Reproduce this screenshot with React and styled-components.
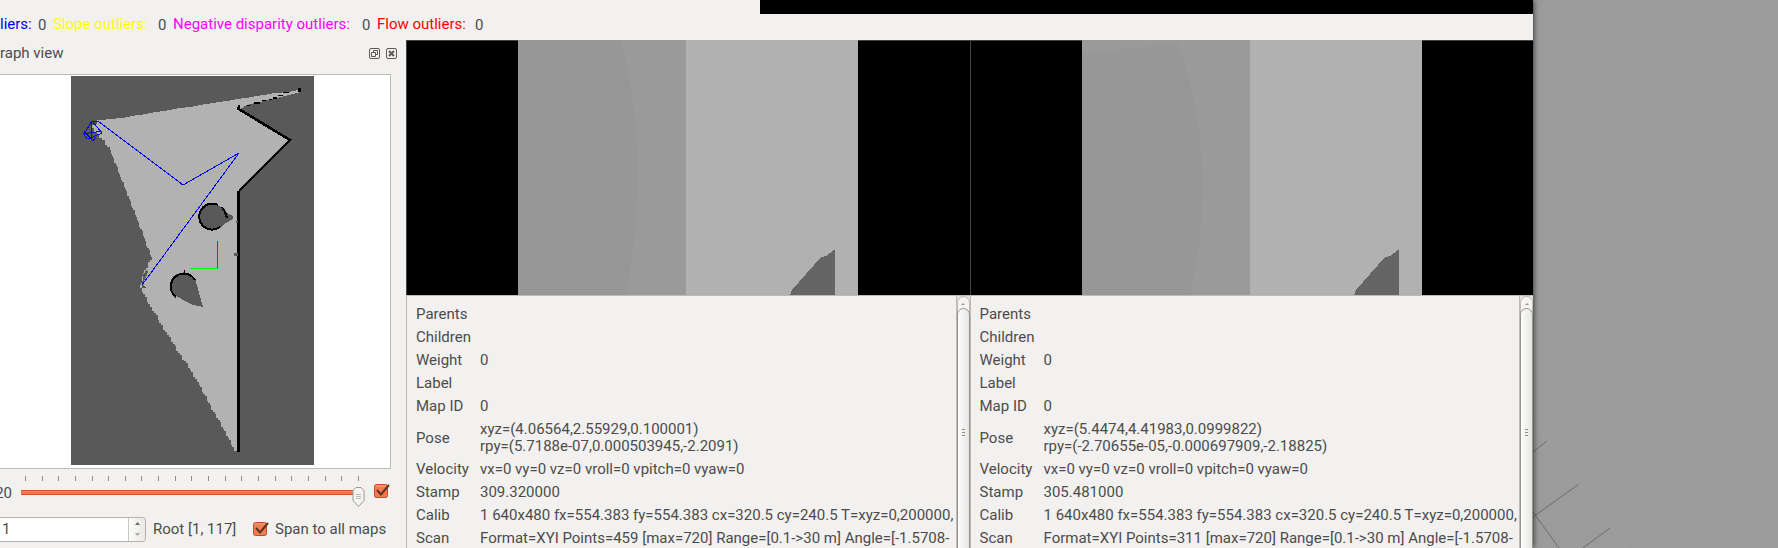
import React, { useState } from "react";
import styled, { createGlobalStyle } from "styled-components";

const GlobalStyle = createGlobalStyle`
  * { box-sizing: border-box; }
  body {
    margin: 0;
    background: #9b9b9b;
    color: #4c4c4c;
    font-family: Roboto, "Noto Sans", sans-serif;
    font-size: 15px;
    line-height: 17px;
  }
  button, input { font: inherit; color: inherit; margin: 0; padding: 0; }
`;

const Screen = styled.div`
  display: flex;
  height: 100vh;
  overflow: hidden;
`;

const Window = styled.main`
  flex: 1;
  min-width: 0;
  display: flex;
  flex-direction: column;
  background: #f2f1f0;
  box-shadow: 0 0 6px rgba(0, 0, 0, 0.8);
  z-index: 1;
`;

const TopStrip = styled.div`
  height: 14px;
  margin-left: 760px;
  background: #000;
`;

const StatusBar = styled.dl`
  display: flex;
  gap: 6px;
  height: 26px;
  margin: 0;
  padding-top: 2px;
  white-space: nowrap;
`;

const StatusName = styled.dt`
  width: ${(p) => p.$width}px;
  color: ${(p) => p.$color};
`;

const StatusValue = styled.dd`
  width: 9px;
  margin: 0;
  padding-top: 1px;
`;

const Workspace = styled.div`
  flex: 1;
  min-height: 0;
  display: flex;
`;

const Dock = styled.section`
  width: 406px;
  flex: none;
  display: flex;
  flex-direction: column;
`;

const DockHeader = styled.header`
  display: flex;
  align-items: center;
  gap: 6px;
  height: 26px;
  padding-right: 9px;
`;

const DockTitle = styled.h2`
  flex: 1;
  margin: 0;
  font-size: 15px;
  font-weight: 400;
`;

const DockButton = styled.button`
  width: 11px;
  height: 11px;
  border: 0;
  background: none;
  display: flex;
`;

const GraphFrame = styled.div`
  display: flex;
  justify-content: center;
  margin: 8px 15px 0 0;
  padding: 1px 5px 3px 0;
  border: solid #bebab5;
  border-width: 1px 1px 1px 0;
  background: #fff;

  svg { display: block; }
`;

const TimelineRow = styled.div`
  display: flex;
  align-items: flex-start;
  height: 47px;
  padding: 7px 16px 0 0;
`;

const TimelineValue = styled.output`
  width: 21px;
  flex: none;
  padding: 9px 9px 0 0;
  display: flex;
  justify-content: flex-end;
`;

const Timeline = styled.div`
  flex: 1;
  margin-right: 9px;
`;

const Ticks = styled.div`
  display: flex;
  justify-content: space-between;
  height: 5px;
  padding: 0 6px 0 4px;
`;

const Tick = styled.i`
  width: 1px;
  background: #8d8b88;
`;

const Slider = styled.input`
  appearance: none;
  display: block;
  width: 100%;
  height: 20px;
  margin-top: 6px;
  background: linear-gradient(#d2542b 0 1px, #f2824f 1px 2px, #f07746 2px 4px, #d2542b 4px 5px)
    0 3px / calc(100% - 8px) 5px no-repeat;
  border-radius: 3px;

  &::-webkit-slider-thumb {
    appearance: none;
    width: 13px;
    height: 20px;
    background: url("data:image/svg+xml,%3Csvg xmlns='http://www.w3.org/2000/svg' width='13' height='20'%3E%3Cpath d='M4 .5h5l3 3v10l-5.500 6-5.500-6v-10z' fill='%23f5f4f3' stroke='%239b9997'/%3E%3Cpath d='M4 7.500h5M4 9.500h5M4 11.500h5' stroke='%23bbb'/%3E%3C/svg%3E");
  }
`;

const Check = styled.input`
  appearance: none;
  flex: none;
  width: 16px;
  height: 16px;
  background: url("data:image/svg+xml,%3Csvg xmlns='http://www.w3.org/2000/svg' width='16' height='16'%3E%3Crect x='.5' y='1.500' width='13' height='13' rx='2' fill='%23f07c4e' stroke='%23bd4d2b'/%3E%3Cpath d='M1.500 3h11' stroke='%23f7a583'/%3E%3Cpath d='M3 7l4 4.500L15 2' fill='none' stroke='%235e3222' stroke-width='2'/%3E%3C/svg%3E");
`;

const TimelineCheck = styled(Check)`
  margin-top: 7px;
`;

const RootRow = styled.div`
  display: flex;
  align-items: center;
  height: 26px;
`;

const SpinBox = styled.div`
  display: flex;
  width: 146px;
  height: 25px;
  margin-right: 7px;
  border: 1px solid #b5b1ac;
  border-left: 0;
  border-radius: 0 4px 4px 0;
  background: #fff;
  overflow: hidden;
`;

const SpinInput = styled.input`
  flex: 1;
  min-width: 0;
  border: 0;
  padding-left: 2px;
  background: #fff;
`;

const SpinButtons = styled.div`
  display: flex;
  flex-direction: column;
  width: 17px;
  border-left: 1px solid #c9c6c2;
  background: linear-gradient(90deg, #fbfbfa, #e9e8e6);
`;

const SpinButton = styled.button`
  flex: 1;
  border: 0;
  background: none;
  display: flex;
  align-items: center;
  justify-content: center;
`;

const RootLabel = styled.label`
  width: 100px;
`;

const CheckLabel = styled.label`
  display: flex;
  align-items: center;
  gap: 6px;
`;

const Panel = styled.section`
  flex: 1;
  min-width: 0;
  display: flex;
  flex-direction: column;
  border-left: 1px solid #bebab5;
`;

const View = styled.div`
  height: 255px;
  flex: none;
  display: flex;
  justify-content: center;
  background: #000;
  border-top: 1px solid #444;
  box-shadow: -1px 0 #444;
`;

const ViewImage = styled.svg`
  display: block;
  height: 255px;
  width: 340px;
  margin-top: -1px;
`;

const DetailArea = styled.div`
  flex: 1;
  min-height: 0;
  display: flex;
  border-top: 1px solid #bebab5;
`;

const DetailViewport = styled.div`
  flex: 1;
  min-width: 0;
  overflow: hidden;
  padding: 7px 0 0 9px;
`;

const Details = styled.table`
  border-collapse: collapse;
  white-space: pre;

  th, td {
    height: 23px;
    padding: 3px 0;
    text-align: left;
    font-weight: 400;
  }

  th { min-width: 64px; }
`;

const ScrollBar = styled.div`
  width: 14px;
  flex: none;
  display: flex;
  flex-direction: column;
  border-left: 1px solid #bebab5;
  background: #e4e2e0;
`;

const ScrollUp = styled.button`
  height: 20px;
  margin-bottom: -8px;
  flex: none;
  border: 1px solid #bebab5;
  border-radius: 7px 7px 0 0;
  background: #f5f4f3;
  display: flex;
  justify-content: center;
  padding-top: 6px;
`;

const ScrollThumb = styled.div`
  height: 248px;
  flex: none;
  border: 1px solid #96938f;
  border-radius: 7px;
  background: linear-gradient(90deg, #fdfdfd, #e6e5e3);
  display: flex;
  flex-direction: column;
  align-items: center;
  justify-content: center;
  gap: 2px;
`;

const Grip = styled.i`
  width: 3px;
  height: 1px;
  background: #8e8c89;
`;

const Desktop = styled.aside`
  width: 245px;
  flex: none;
  display: flex;
  align-items: flex-end;
`;

const STATUS = [
  ["liers:", "#0000ff", 32, 0],
  ["Slope outliers:", "#ffff00", 99, 0],
  ["Negative disparity outliers:", "#ff00ff", 183, 0],
  ["Flow outliers:", "#ff0000", 92, 0],
];

const NODES = [
  {
    id: "a",
    rows: [
      ["Parents", ""],
      ["Children", ""],
      ["Weight", "0"],
      ["Label", ""],
      ["Map ID", "0"],
      ["Pose", "xyz=(4.06564,2.55929,0.100001)\nrpy=(5.7188e-07,0.000503945,-2.2091)"],
      ["Velocity", "vx=0 vy=0 vz=0 vroll=0 vpitch=0 vyaw=0"],
      ["Stamp", "309.320000"],
      ["Calib", "1 640x480 fx=554.383 fy=554.383 cx=320.5 cy=240.5 T=xyz=0,200000,"],
      ["Scan", "Format=XYI Points=459 [max=720] Range=[0.1->30 m] Angle=[-1.5708-"],
    ],
    shade: "M0 0H102C123 65 125 170 108 255H0Z",
  },
  {
    id: "b",
    rows: [
      ["Parents", ""],
      ["Children", ""],
      ["Weight", "0"],
      ["Label", ""],
      ["Map ID", "0"],
      ["Pose", "xyz=(5.4474,4.41983,0.0999822)\nrpy=(-2.70655e-05,-0.000697909,-2.18825)"],
      ["Velocity", "vx=0 vy=0 vz=0 vroll=0 vpitch=0 vyaw=0"],
      ["Stamp", "305.481000"],
      ["Calib", "1 640x480 fx=554.383 fy=554.383 cx=320.5 cy=240.5 T=xyz=0,200000,"],
      ["Scan", "Format=XYI Points=311 [max=720] Range=[0.1->30 m] Angle=[-1.5708-"],
    ],
    shade: "M0 14L95 3C125 75 127 175 108 255H0Z",
  },
];

/* Turns a polyline into the stepped edge of an occupancy grid. */
function stepped(points) {
  let d = `M${points[0][0]} ${points[0][1]}`;
  for (let i = 1; i < points.length; i += 1) {
    const [x0, y0] = points[i - 1];
    const [x1, y1] = points[i];
    const n = Math.max(1, Math.round(Math.max(Math.abs(x1 - x0), Math.abs(y1 - y0)) / 3));
    for (let k = 1; k <= n; k += 1) {
      const jitter = k < n ? ((k * 7 + i * 3) % 3) - 1 : 0;
      const x = Math.round(x0 + ((x1 - x0) * k) / n);
      const y = Math.round(y0 + ((y1 - y0) * k) / n);
      d += Math.abs(x1 - x0) > Math.abs(y1 - y0) ? `H${x + jitter}V${y}` : `V${y + jitter}H${x}`;
    }
  }
  return d;
}

const FREE_LEFT = stepped([
  [166, 375], [163, 374], [126, 306], [96, 259], [79, 231], [69, 212], [73, 197], [81, 184],
  [66, 144], [49, 101], [39, 74], [28, 62], [21, 52], [28, 44], [56, 41], [89, 35], [136, 28],
  [152, 25], [189, 19], [229, 14],
]);

function OccupancyMap() {
  return (
    <svg width="243" height="389" viewBox="0 0 243 389" shapeRendering="crispEdges" role="img" aria-label="Graph map">
      <rect width="243" height="389" fill="#595959" />
      <path d={`${FREE_LEFT}L230 16L202 23L176 29L169 33L219 64L168 115V375Z`} fill="#b2b2b2" />
      <path d="M227 12h3v4h-3zM212 16h6v1h-6zM207 19h5v1h-5zM202 21h4v2h-4zM198 23h3v1h-3zM191 24h4v1h-4zM183 26h6v2h-6zM176 29h3v1h-3zM167 29h2v3h-2z" fill="#000" />
      <path d="M166 32L219 64L168 115" fill="none" stroke="#000" strokeWidth="2.6" />
      <path d="M166 115h3v261h-3z" fill="#000" />
      <path d="M163 177h4v3h-4zM165 145h2v2h-2z" fill="#595959" />

      <path d="M152 131L156 137L162 140V143L155 147L149 152Z" fill="#595959" />
      <circle cx="141" cy="141" r="13" fill="#595959" />
      <path d="M147 129A13 13 0 1 0 149 151M151 131L154 136L156 142" fill="none" stroke="#000" strokeWidth="2" />

      <path d="M101 218L112 196L124 202L130 224L132 231L122 229Z" fill="#595959" />
      <circle cx="111" cy="209" r="12" fill="#595959" />
      <path d="M124 204A13 13 0 1 0 105 221" fill="none" stroke="#000" strokeWidth="2" />
      <path d="M113 194h1v3h-1z" fill="#000" />
      <path d="M72 199l4-6 1 3-5 12 3 4h-4z" fill="#595959" />

      <path d="M119 192h28v1h-28z" fill="#00f500" />
      <path d="M146 165h1v27h-1z" fill="#f00" />
      <path
        d="M71 209L168 77L112 109L27 45H21L13 58L16 63M21 45L31 57L17 63M20 46V63M12 58L31 55M13 55L22 65L25 61"
        fill="none"
        stroke="#0000e8"
      />
    </svg>
  );
}

function CameraView({ shade }) {
  return (
    <ViewImage viewBox="0 0 340 255" role="img" aria-label="Camera image">
      <rect width="168" height="255" fill="#9a9a9a" />
      <path d={shade} fill="#979797" />
      <rect x="168" width="172" height="255" fill="#b1b1b1" />
      <path d="M272 255L274 250L303 217L308 216L316 210H317V255Z" fill="#656565" shapeRendering="crispEdges" />
    </ViewImage>
  );
}

function NodePanel({ node }) {
  return (
    <Panel>
      <View>
        <CameraView shade={node.shade} />
      </View>
      <DetailArea>
        <DetailViewport>
          <Details>
            <tbody>
              {node.rows.map(([name, value]) => (
                <tr key={name}>
                  <th scope="row">{name}</th>
                  <td>{value}</td>
                </tr>
              ))}
            </tbody>
          </Details>
        </DetailViewport>
        <ScrollBar>
          <ScrollUp aria-label="Scroll up">
            <svg width="4" height="2"><path d="M0 2L2 0L4 2z" fill="#9b9997" /></svg>
          </ScrollUp>
          <ScrollThumb>
            <Grip /><Grip /><Grip />
          </ScrollThumb>
        </ScrollBar>
      </DetailArea>
    </Panel>
  );
}

export default function App() {
  const [position, setPosition] = useState(20);
  const [root, setRoot] = useState(1);

  return (
    <>
      <GlobalStyle />
      <Screen>
        <Window>
          <TopStrip />
          <StatusBar>
            {STATUS.map(([name, color, width, value]) => (
              <React.Fragment key={name}>
                <StatusName $color={color} $width={width}>{name}</StatusName>
                <StatusValue>{value}</StatusValue>
              </React.Fragment>
            ))}
          </StatusBar>
          <Workspace>
            <Dock>
              <DockHeader>
                <DockTitle>raph view</DockTitle>
                <DockButton aria-label="Float">
                  <svg width="11" height="11" fill="none" stroke="#5c5a57">
                    <rect x=".5" y=".5" width="10" height="10" rx="1.500" />
                    <path d="M4.500 4V2.500h4v4H7M2.500 4.500h4v4h-4z" />
                  </svg>
                </DockButton>
                <DockButton aria-label="Close">
                  <svg width="11" height="11" fill="none" stroke="#5c5a57">
                    <rect x=".5" y=".5" width="10" height="10" rx="1.500" />
                    <path d="M3 3l5 5M8 3l-5 5" strokeWidth="2" />
                  </svg>
                </DockButton>
              </DockHeader>
              <GraphFrame>
                <OccupancyMap />
              </GraphFrame>
              <TimelineRow>
                <TimelineValue>{position}</TimelineValue>
                <Timeline>
                  <Ticks>
                    {Array.from({ length: 21 }, (_, i) => <Tick key={i} />)}
                  </Ticks>
                  <Slider
                    type="range"
                    min="0"
                    max="20"
                    aria-label="Graph position"
                    value={position}
                    onChange={(e) => setPosition(Number(e.target.value))}
                  />
                </Timeline>
                <TimelineCheck type="checkbox" defaultChecked aria-label="Show whole graph" />
              </TimelineRow>
              <RootRow>
                <SpinBox>
                  <SpinInput id="root-node" value={root} onChange={(e) => setRoot(e.target.value)} />
                  <SpinButtons>
                    <SpinButton aria-label="Increase" onClick={() => setRoot(Number(root) + 1)}>
                      <svg width="5" height="3"><path d="M0 3L2.500 0L5 3z" fill="#6b6966" /></svg>
                    </SpinButton>
                    <SpinButton aria-label="Decrease" onClick={() => setRoot(Number(root) - 1)}>
                      <svg width="5" height="3"><path d="M0 0L2.500 3L5 0z" fill="#a9a7a4" /></svg>
                    </SpinButton>
                  </SpinButtons>
                </SpinBox>
                <RootLabel htmlFor="root-node">Root [1, 117]</RootLabel>
                <CheckLabel>
                  <Check type="checkbox" defaultChecked />
                  Span to all maps
                </CheckLabel>
              </RootRow>
            </Dock>
            {NODES.map((node) => <NodePanel key={node.id} node={node} />)}
          </Workspace>
        </Window>
        <Desktop>
          <svg width="245" height="128" viewBox="0 0 245 128" fill="none" stroke="#6e6e6e" aria-hidden="true">
            <path d="M0 0L92 128" stroke="#a0a0a0" />
            <path d="M0 32L14 21M0 97L46 64M50 128L77 108M0 92L26 128" />
          </svg>
        </Desktop>
      </Screen>
    </>
  );
}
